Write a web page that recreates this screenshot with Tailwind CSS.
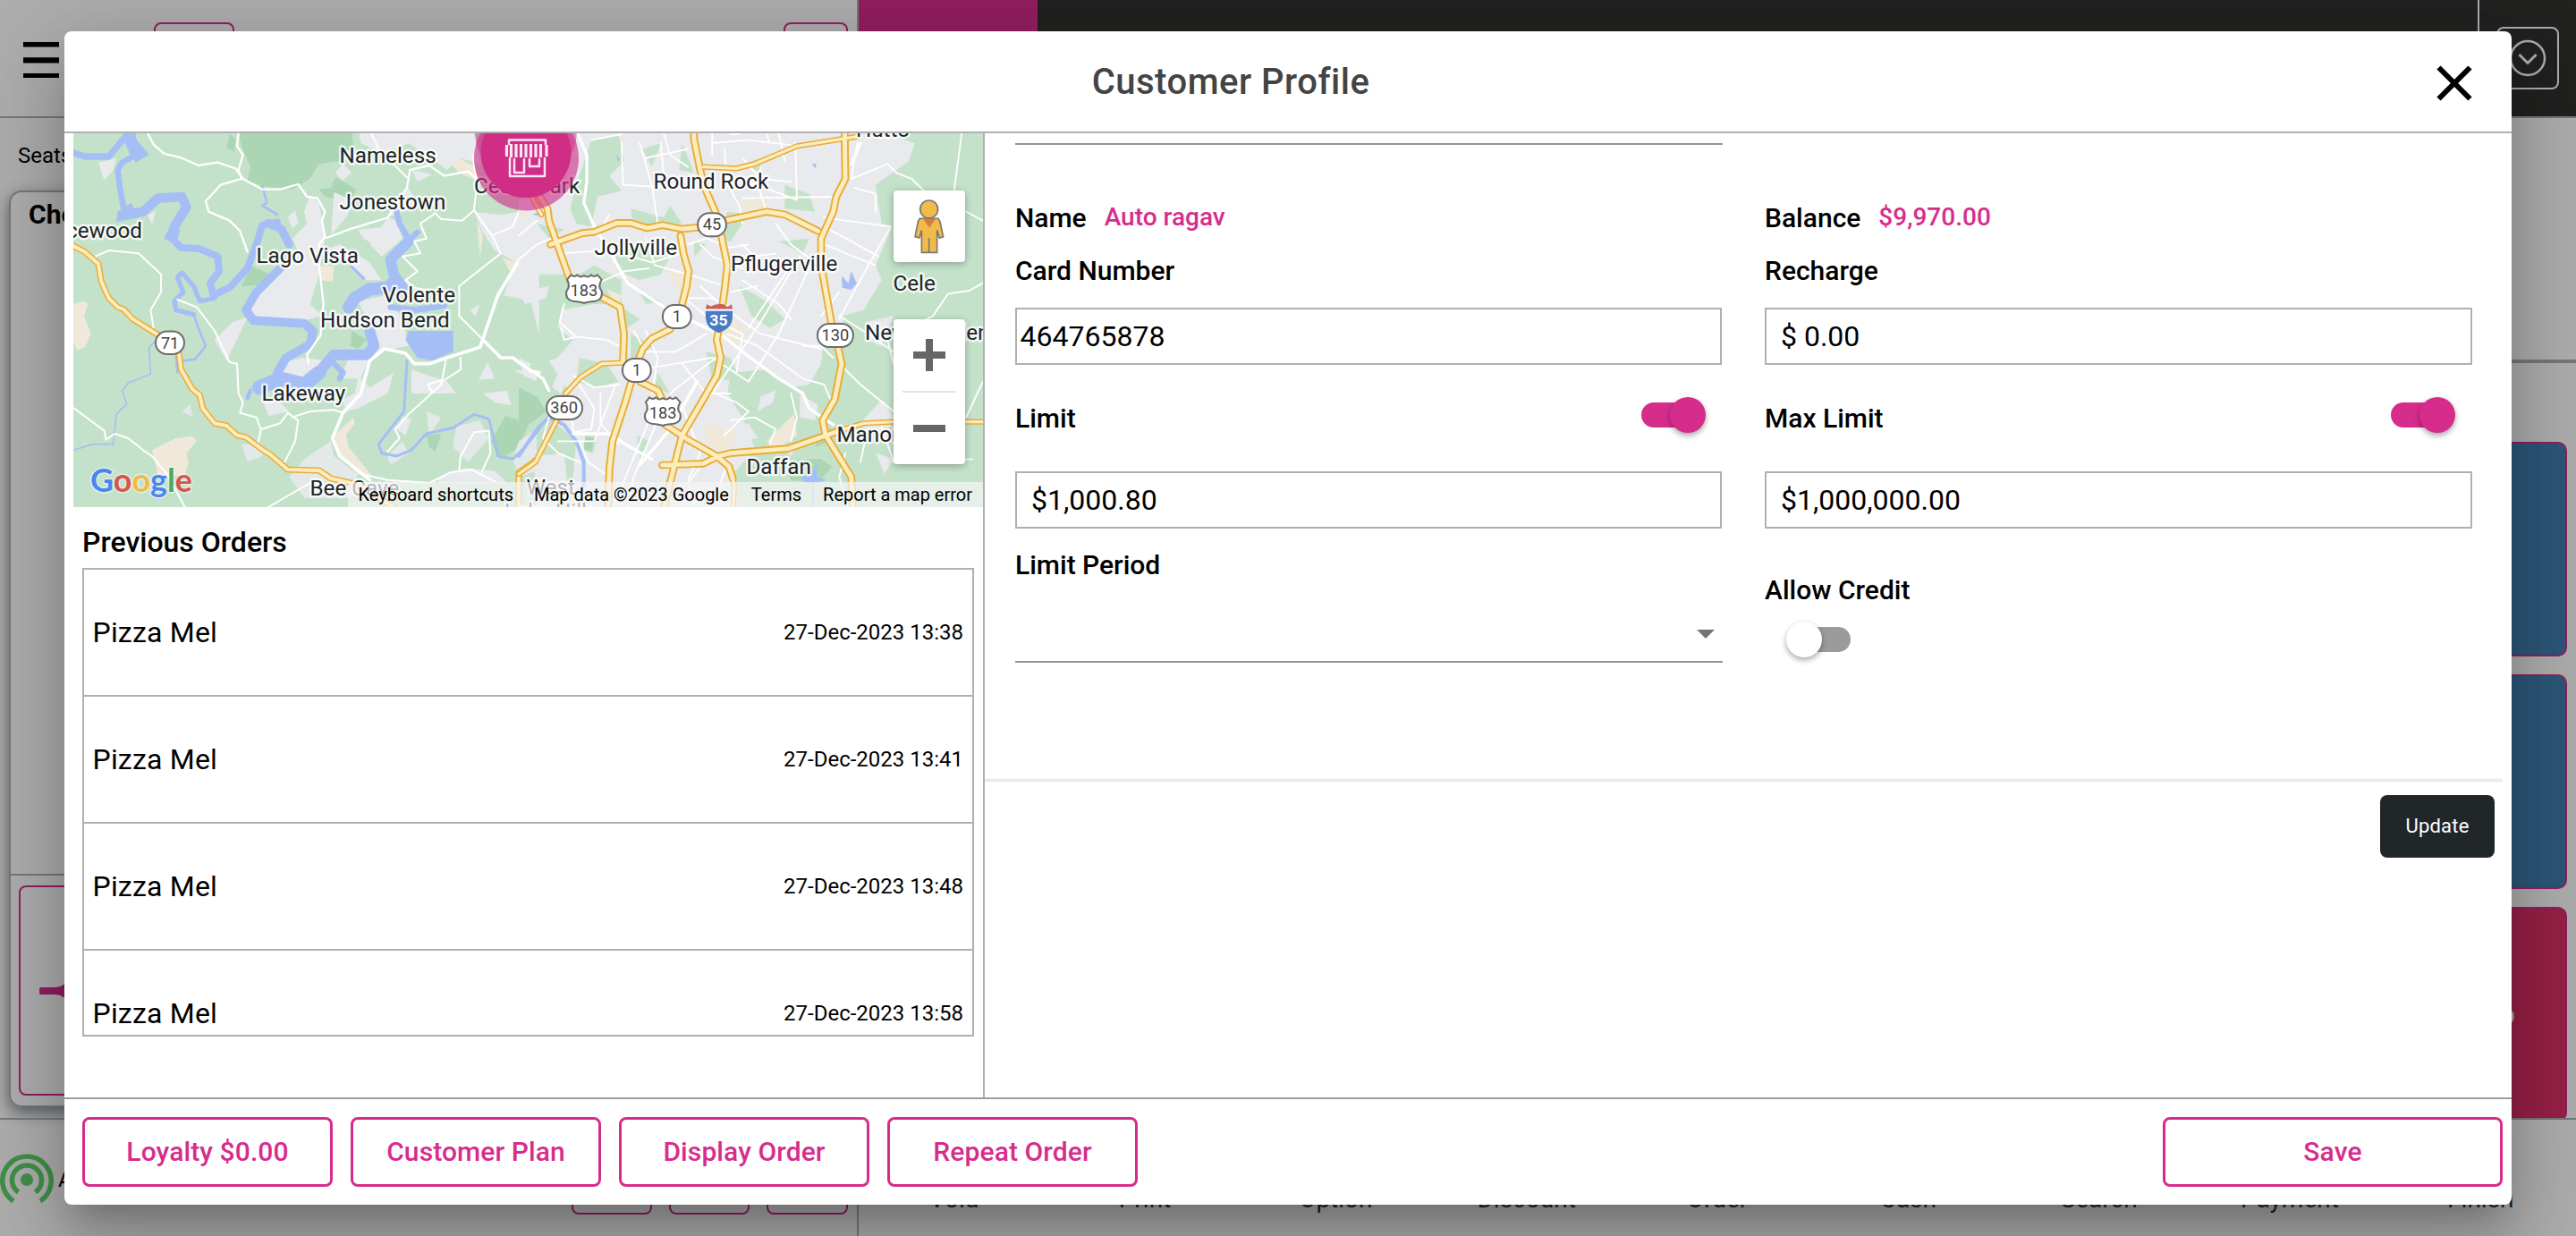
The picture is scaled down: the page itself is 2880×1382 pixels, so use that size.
<!DOCTYPE html>
<html lang="en">
<head>
<meta charset="utf-8">
<title>Customer Profile</title>
<script src="https://cdn.jsdelivr.net/npm/@tailwindcss/browser@4"></script>
</head>
<body class="font-[Roboto,sans-serif] text-black">
<div class="relative flex h-[1382px] w-[2880px] overflow-hidden bg-white">

  <!-- Left order panel -->
  <aside class="flex w-[960px] shrink-0 flex-col border-r-2 border-[#b0b0b0]">
    <header class="flex h-[132px] items-start border-b-2 border-[#b0b0b0] pl-[26px]">
      <svg class="mt-[47px] h-10 w-10" viewBox="0 0 40 40"><path d="M0 0h40v5.6H0zM0 17.2h40v6.4H0zM0 35h40v5.2H0z"/></svg>
      <div class="mt-[25px] ml-[106px] h-[80px] w-[90px] rounded-lg border-2 border-[#d62d8c]"></div>
      <div class="mt-[25px] mr-[10px] ml-auto h-[80px] w-[72px] rounded-lg border-2 border-[#d62d8c]"></div>
    </header>
    <div class="h-[81px] pt-[24px] pl-[20px] text-2xl leading-9">Seats</div>
    <section class="ml-[10px] h-[1025px] w-[938px] rounded-[14px] border-2 border-[#b0b0b0] shadow-[0_6px_18px_#7f8994]">
      <div class="h-[764px] border-b-2 border-[#b0b0b0] pt-[5px] pl-5 text-[30px] leading-10 font-bold">Check</div>
      <div class="mx-[9px] mt-[11px] flex h-[235px] items-center rounded-lg border-2 border-[#d62d8c] pl-[21px]">
        <svg class="h-10 w-20" viewBox="0 0 80 40"><path fill="#d62d8c" d="M1.500 16H18Q23 16 27 13L34 10V30L27 27Q23 24 18 24H1.500Q0 24 0 22V18Q0 16 1.500 16Z"/></svg>
      </div>
    </section>
    <footer class="mt-3 flex h-[132px] border-t-2 border-[#b0b0b0]">
      <svg class="mt-[35px] h-[62px] w-[60px]" viewBox="0 0 60 62" fill="none" stroke="#5fd36b" stroke-width="5.500">
        <path d="M15 56A27.200 27.200 0 1 1 45 56"/><path d="M20.500 46A16.500 16.500 0 1 1 39.500 46"/><circle cx="30" cy="32" r="7" fill="#5fd36b" stroke="none"/>
      </svg>
      <div class="ml-[5px] w-[574px] pt-[49px] text-2xl leading-9">Auto</div>
      <div class="mt-[26px] mr-[19px] h-[80px] w-[90px] rounded-lg border-2 border-[#d62d8c]"></div>
      <div class="mt-[26px] mr-[19px] h-[80px] w-[90px] rounded-lg border-2 border-[#d62d8c]"></div>
      <div class="mt-[26px] h-[80px] w-[91px] rounded-lg border-2 border-[#d62d8c]"></div>
    </footer>
  </aside>

  <!-- Right menu panel -->
  <main class="flex w-[1920px] flex-col">
    <header class="flex h-[132px] border-b-2 border-[#b0b0b0] bg-[#323230]">
      <div class="w-[200px] bg-[#d62d8c]"></div>
      <div class="ml-auto flex w-[110px] items-start border-l-2 border-white pt-[30px] pl-[19px]">
        <div class="flex h-[70px] w-[70px] items-center justify-center rounded-lg border-2 border-white">
          <svg class="h-11 w-11" viewBox="0 0 44 44" fill="none" stroke="#fff" stroke-width="2.500"><circle cx="22" cy="22" r="19"/><path stroke-width="3" d="M12.500 18l9.500 9.500 9.500-9.500"/></svg>
        </div>
      </div>
    </header>
    <div class="h-[274px] border-b-4 border-[#b0b0b0]"></div>
    <div class="flex h-[844px] flex-col items-end gap-5 overflow-hidden pt-[88px] pr-[10px]">
      <div class="h-[240px] w-[200px] shrink-0 rounded-[10px] border-2 border-[#d62d8c] bg-[#4280b2]"></div>
      <div class="h-[240px] w-[200px] shrink-0 rounded-[10px] border-2 border-[#d62d8c] bg-[#4280b2]"></div>
      <div class="flex h-[240px] w-[200px] shrink-0 items-center justify-end rounded-[10px] border-2 border-[#d62d8c] bg-[#dd3068] pr-[56px] text-[32px] text-white">Go</div>
    </div>
    <footer class="grid h-[132px] grid-cols-9 border-t-2 border-[#b0b0b0] pt-[71px] text-center text-[28px] leading-[36px] text-[#323230]">
      <span>Void</span><span>Print</span><span>Option</span><span>Discount</span><span>Order</span><span>Cash</span><span>Search</span><span>Payment</span><span>Finish</span>
    </footer>
  </main>

  <!-- Backdrop and dialog -->
  <div class="absolute inset-0 bg-black/32 pt-[35px] pl-[72px]">
    <div class="flex h-[1312px] w-[2736px] flex-col overflow-hidden rounded-lg bg-white shadow-[0_22px_30px_-14px_rgba(0,0,0,0.2),0_48px_76px_6px_rgba(0,0,0,0.14),0_18px_92px_16px_rgba(0,0,0,0.12)]">

      <header class="flex h-[114px] shrink-0 items-center border-b-2 border-[#b0b0b0] pr-[43px]">
        <h1 class="mt-[2px] w-[2608px] text-center text-[40px] leading-[52px] font-medium tracking-[0.5px] text-[#444]">Customer Profile</h1>
        <svg class="mt-[3px] ml-auto h-[42px] w-[42px]" viewBox="0 0 42 42"><path d="M3.500 3.500l35 35M38.500 3.500l-35 35" stroke="#000" stroke-width="6"/></svg>
      </header>

      <div class="flex h-[1078px] shrink-0">
        <!-- Map and previous orders -->
        <section class="flex w-[1029px] shrink-0 flex-col border-r-2 border-[#b0b0b0] pl-[10px]">
          <div class="relative h-[418px] w-[1017px] overflow-hidden">
            <svg class="block h-[418px] w-[1017px]" viewBox="82 149 1017 418" stroke-linejoin="round" stroke-linecap="round">
              <rect x="82" y="149" width="1017" height="418" fill="#c4e2ca"/>
              <!-- western half -->
              <g transform="translate(80 140) scale(.33333)">
                <g fill="#abd5b3">
                  <path d="M560 27H940L945 70 900 120 830 130 800 180 740 215 640 205 590 185 600 140 570 70Z"/>
                  <path d="M885 175L955 215 935 255 850 240 830 215 870 210ZM530 30L550 45 545 90 520 75Z"/>
                  <path d="M600 470L670 500 660 535 570 540ZM1455 975L1535 1000 1500 1080 1440 1120 1405 1060 1430 1020ZM940 690L990 720 960 750 935 740ZM1190 1040L1240 1035 1220 1095 1200 1080Z"/>
                </g>
                <g fill="#e8eaed">
                  <path d="M965 27H1350L1370 130 1300 110 1260 150 1190 100 1130 60 1050 100 970 60Z"/>
                  <path d="M800 235L830 260 850 380 830 500 800 600 840 640 780 655 640 650 590 640 600 590 680 510 700 480 760 420 740 380 790 330 780 290Z"/>
                  <path d="M520 790L480 720 540 660 590 645ZM880 225L950 255 920 310 870 370ZM960 350L1060 340 1010 400 980 380ZM1140 150L1210 165 1160 190ZM910 130L940 160 910 185 885 160Z"/>
                  <path d="M1060 310L1090 320 1110 380 1040 440 1000 400ZM90 125L150 110 140 150 110 185ZM725 310L750 285 760 330 740 345ZM255 300L282 290 270 335ZM840 420L900 400 1000 460 1040 520 980 520 930 460 870 440Z"/>
                  <path d="M960 590L1060 570 1110 650 1130 740 1050 755 990 800 970 850 1000 880 1080 830 1060 900 960 950 920 960 910 920 950 900 960 850 900 850 930 780 1030 740 1000 670ZM690 800L780 780 850 790 820 840 720 850Z"/>
                  <path d="M1350 290L1440 300 1568 280V700L1540 590 1450 570 1490 460 1420 420 1380 360ZM1130 210L1160 260 1110 290 1060 310ZM1140 820L1200 840 1260 860 1290 900 1140 900ZM1395 795L1420 850 1365 855ZM1380 900L1460 890 1475 940 1420 930ZM1480 820L1560 830V860Z"/>
                  <path d="M1190 960L1240 980 1200 1040ZM1290 1010L1370 990 1400 1050 1330 1130 1280 1080ZM1500 1060L1560 1020V1160L1500 1180 1480 1120ZM780 1120L870 1060 880 1110 960 1170 940 1250 780 1250 730 1180ZM1060 1110L1110 1060 1130 1100 1070 1140ZM570 1070L640 1070 640 1110 590 1130ZM370 960L400 935 405 978Z" opacity=".85"/>
                  <path d="M1335 620L1370 600 1355 640ZM640 920L700 930 730 960 660 975ZM1110 980L1140 985 1120 1040 1090 1020ZM1230 1180L1320 1150 1420 1160 1460 1200H1230Z"/>
                </g>
                <g fill="#f0e9da">
                  <path d="M6 600L40 590 55 600 42 640 65 700 45 745 20 755 6 730ZM270 1090L350 1050 405 1043 420 1060 385 1100 392 1130 380 1175 290 1175Z"/>
                  <path d="M1270 125L1300 112 1355 140 1370 190 1300 160ZM835 470L880 475 875 525 835 520ZM880 1040L945 980 950 1000 920 1040 930 1080 1010 1180 960 1170 900 1110ZM1360 320L1380 370 1370 440ZM1445 445L1490 460 1475 500Z"/>
                </g>
                <g fill="none" stroke="#a5bff6">
                  <path stroke-width="22" d="M6 92L45 105H125L175 45 190 27"/>
                  <path stroke-width="20" d="M205 27L215 100 170 125 155 150 162 210 175 280 180 300"/>
                  <path stroke-width="32" d="M170 300L240 290 290 245 370 240 385 275 345 340 335 370"/>
                  <path stroke-width="24" d="M330 370L365 410 430 415 490 440 495 490 465 530 475 570 530 545 590 480 620 400 640 335 690 325"/>
                  <path stroke-width="28" d="M660 328L705 350 730 400M700 480L620 560 585 620"/>
                  <path stroke-width="16" d="M480 580L430 590 410 540 370 495 355 510 375 560 345 590 350 620 410 635"/>
                  <path stroke-width="8" d="M410 635L425 680 450 740 415 785 375 790M640 205L655 260 640 270 690 300M355 830L350 760"/>
                  <path stroke-width="30" d="M585 620L610 655 780 665 810 690 800 735 720 780 690 830"/>
                  <path stroke-width="48" d="M630 880L700 850 780 870 830 830"/>
                  <path stroke-width="14" d="M600 890L590 915"/>
                  <path stroke-width="36" d="M820 840L880 770 990 770 1015 740 1000 690"/>
                  <path stroke-width="42" d="M930 610L950 580 1000 550 1060 545 1090 520"/>
                  <path stroke-width="36" d="M1110 545L1080 500 1070 450 1130 390"/>
                  <path stroke-width="20" d="M1135 390L1100 330 1090 290M1130 385L1160 360M1070 610L1150 620 1250 605M870 790L910 830 900 850"/>
                  <path stroke-width="10" d="M980 515L940 475"/>
                  <path stroke-width="9" d="M1125 790L1115 960 1030 1070 1040 1100 1090 1110 1140 1090 1190 1035 1280 1015 1350 970 1400 985 1430 1110 1480 1120 1520 1080 1568 1020"/>
                  <path stroke-width="5" d="M280 725L260 745 265 835 190 865 170 890 185 935 150 970 140 1070 70 1070 6 1090"/>
                </g>
                <path fill="#a5bff6" d="M1130 690H1280V760L1210 790 1160 780 1120 720ZM155 290L200 260 225 310 150 325ZM310 380L330 340 365 350 350 400ZM170 40H210L260 98 215 125 195 95Z"/>
                <g fill="none" stroke="#fff">
                  <path stroke-width="7" d="M255 27L275 65 310 95 370 110 425 135 490 125 550 145 575 180 640 215 700 215 760 198 790 240 825 245 850 290 840 320 850 375 830 400 830 470 845 600 835 705 790 770 795 800"/>
                  <path stroke-width="7" d="M560 27L555 70 575 100 560 150 570 180M570 180L500 200 450 255 460 290 530 320 565 355 590 425M855 378L930 350 1060 310 1125 210 1135 150 1200 135 1250 170 1330 155 1360 180"/>
                  <path stroke-width="6" d="M80 440L125 420 225 430 300 500 300 560 265 620 275 680M355 585L420 610 480 690 530 795 555 800 560 900 575 930 565 965 620 980 635 1020 625 1070"/>
                  <path stroke-width="6" d="M6 948L110 1025 115 1055 145 1035 190 1050 240 1090 270 1110 320 1170 380 1281M635 1020L700 1000 725 965 760 990 750 1060 715 1130M740 980L800 960 880 955 910 965M1005 27L1030 80 1125 175"/>
                  <path stroke-width="6" d="M1350 285L1310 320 1240 315 1220 295 1170 330 1190 380 1150 390 1170 430 1110 440 1160 490 1120 520 1150 545 1200 555M1350 285L1410 370 1440 430 1350 500 1300 540 1300 640 1380 720M1060 1095L1100 1050 1085 1020 1130 970 1240 870 1255 790M1240 855L1195 870 1210 895M1305 780V820L1250 855M1300 1160L1305 1110 1350 1030 1400 1025 1405 1100 1375 1165M660 1281L800 1200M970 1170L1060 1190 1200 1200 1270 1165 1340 1155 1420 1195M1350 280L1360 200 1345 100M1410 370L1480 340 1500 290 1560 330"/>
                  <path stroke-width="11" d="M1568 415L1500 455 1430 570 1370 745 1260 780 1200 800 1150 800 1120 765 1050 750 1000 790 970 900 910 965 875 1050 900 1110 1000 1190M1380 720L1440 780 1480 780 1540 825 1568 830"/>
                </g>
                <g fill="none">
                  <path stroke="#e9ad37" stroke-width="21" d="M0 402L45 425 90 465 100 525 125 580 155 610 175 618 205 650 290 703 M360 765L367 818 405 885 430 905 440 950 480 1000 520 1008 555 1040 585 1047 640 1088 665 1103 725 1155 830 1158 870 1185 960 1205 1080 1281M1568 1110L1550 1130 1500 1165 1500 1281"/>
                  <path stroke="#fdecbc" stroke-width="12" d="M0 402L45 425 90 465 100 525 125 580 155 610 175 618 205 650 290 703 M360 765L367 818 405 885 430 905 440 950 480 1000 520 1008 555 1040 585 1047 640 1088 665 1103 725 1155 830 1158 870 1185 960 1205 1080 1281M1568 1110L1550 1130 1500 1165 1500 1281"/>
                </g>
              </g>
              <!-- eastern half -->
              <g transform="translate(580 140) scale(.33802 .33333)">
                <path fill="#e8eaed" d="M60 27H1200L1310 60 1290 120 1180 200 1200 330 1235 340 1180 470 1200 520 1140 620 1070 640 1080 680 1010 690 1000 800 960 870 900 880 820 820 700 830 690 900 740 980 780 1080 760 1110 700 1180 730 1285H170L190 1060 100 980 170 900 110 800 180 720 130 680 140 620 250 600 340 600 340 520 250 470 200 500 60 500 0 480V250L80 240Z"/>
                <g fill="#c4e2ca">
                  <path d="M240 50L330 30 350 120 300 170 340 220 260 240 240 340 190 330 170 280 190 200ZM370 280L480 310 500 270 540 330 380 340ZM320 440L410 400 500 440 470 500 400 520 330 490ZM690 290L760 300 700 390 660 380Z"/>
                  <path d="M410 80L470 60 440 140ZM740 130L800 110 800 160ZM880 200L960 230 980 290 880 280ZM580 390L620 400 580 440ZM730 540L820 590 880 650 830 680 770 640ZM400 560L470 590 420 600ZM340 610L400 650 360 680ZM200 780L290 800 330 860 260 880 190 860ZM860 390L960 380 940 430ZM620 760L700 780 730 850 640 860ZM370 700L450 740 370 790ZM220 1040L260 1045 245 1100 215 1090ZM60 330L150 350 100 380ZM540 60L580 160 530 150ZM390 1040L430 1060 400 1120ZM460 830L500 900 450 880Z"/>
                </g>
                <g fill="#abd5b3"><path d="M880 1130L960 1120 1000 1120 1035 1145 990 1200 900 1190ZM0 880L60 910 90 960 40 1000 0 1000ZM990 1040L1030 1060 980 1080ZM220 1045L250 1050 240 1095 215 1085Z"/></g>
                <g fill="#e8eaed">
                  <path d="M1130 1000L1200 920 1240 980 1220 1040 1150 1030ZM800 910L850 890 840 930 790 960ZM930 900L990 940 980 990 930 980ZM100 790L160 770 130 840ZM1150 660L1240 640 1200 740 1150 720ZM130 830L160 850 140 900 110 880ZM1180 1100L1240 1120 1210 1170ZM860 1080L920 1080 900 1110ZM700 1010L760 1000 790 1050 700 1060Z"/>
                  <path d="M0 560L100 540 90 580 20 600ZM0 780L40 800 20 850ZM50 1110L150 1100 170 1285H60Z"/>
                </g>
                <g fill="#f0e9da">
                  <path d="M500 490L580 480 570 570 530 560ZM730 260L830 240 820 290 760 310ZM820 1060L910 970 920 1040 850 1090ZM610 1000L720 1020 700 1100 620 1070ZM700 640L760 690 710 740 670 700ZM0 290L40 300 0 320ZM280 380L340 390 290 430ZM290 550L340 570 330 620Z"/>
                </g>
                <g fill="#a5bff6"><path d="M1068 505L1090 530 1100 490 1118 530 1100 552 1070 545ZM930 1180L965 1175 985 1135 985 1180 1020 1190 980 1200H950ZM320 95L335 115 330 122ZM970 130L985 130 980 145ZM45 300L80 285 70 305Z"/>
                  <path fill="none" stroke="#a5bff6" stroke-width="12" d="M0 1110L60 1020 100 980 150 1005 190 1060 215 1130 215 1210"/>
                  <path fill="none" stroke="#a5bff6" stroke-width="6" d="M973 1190V1285"/></g>
                <g fill="none" stroke="#fff" stroke-width="5.500">
                  <path d="M340 60L345 200 500 210M400 60L440 200 460 330M240 50L340 30M420 110L560 80M640 100V27M680 80L690 200 730 270 740 330M800 140L790 200 820 290M915 60L920 250M740 245L1040 240M640 60L760 50 930 70M690 170L840 220 920 250M860 27L880 120"/>
                  <path d="M130 430L300 420 440 460 540 430M240 540L350 490 430 480M420 380L450 470 560 500 680 540M600 400L640 440 740 480M600 540L690 620 800 700 1000 750M740 520L860 600 900 650M960 480L860 700 760 860M930 440L800 660 640 900M900 470L760 680M740 400L780 440 850 430M850 330L900 400 980 460M700 560L790 540M560 400L620 380 700 410 760 400"/>
                  <path d="M1010 340L1190 440M1010 400L1180 470M1230 340L1010 310M1230 340L1140 500 1060 650M1120 60L1100 180 1220 130 1250 160 1300 180 1340 220 1480 290 1535 320M1465 27L1440 220M1110 210L1180 230 1180 290M1535 530L1490 555 1420 565 1370 640 1290 680M1060 640L1140 690 1240 760M1060 800L1130 870 1240 960M1220 720L1240 800M1535 860L1480 980M1080 1100L1060 1180 1090 1285M1150 1040L1130 1130M1200 1010L1240 1130 1500 1120"/>
                  <path d="M150 600L135 660 190 710 290 720 330 740M140 680L150 720 190 710M180 840L250 880 330 870M200 870L250 950 240 1020 180 1030 175 980M320 870L250 1060 130 1060M380 690L420 760 520 760 620 700M400 820L520 800 640 780 760 860M460 920L370 1140 310 1285M500 900L600 820 680 760M480 940L380 1180 360 1285M270 900L270 1000 330 1070M540 940L600 1100 560 1190M650 900L720 930 760 960 680 1040M540 800L620 900 700 900M420 690L460 780 440 900M700 990L780 980 850 1020 830 1070M620 1120L560 1200 580 1285M680 1160L640 1285M200 1060L230 1130 300 1180M560 590L620 640 740 700 720 830M690 700L790 740 940 850 1010 870 1040 940"/>
                  <path d="M560 580L640 580 700 610M740 110L800 180 900 190M300 300L260 370 220 360M0 450L60 400 130 370M0 370L60 320M940 740L1000 740 1040 780M900 900L920 980 900 1060M1000 640L1060 560M100 980L80 1050 130 1100 200 1130M820 27L830 60M480 27L500 100 560 140M470 60L480 180"/>
                </g>
                <g fill="none" stroke="#fff" stroke-width="10">
                  <path d="M195 27L225 100 225 190 215 260 250 340 310 440 360 530 480 610 680 710 740 760 860 850 940 900 960 950 1040 1005M0 795L80 850 100 890M1130 60L1100 130M700 27L730 27M590 860L500 1020 400 1140M180 1035L300 1035 360 1075 440 1120"/>
                </g>
                <g fill="none" stroke="#e9ad37" stroke-width="26">
                  <path d="M578 0L580 50 600 150 615 210 650 290 670 370 690 470 680 560 660 690 655 720 668 780 655 840 610 920 540 1040 515 1140 480 1285M70 240L95 280 100 320 145 450 170 520M265 572L335 610 348 700 345 790 M105 400L210 362 250 358 325 328 370 328 425 345 475 335 540 348 600 342 690 318 820 290 880 300 990 355M535 370L545 430 562 490 555 540 540 600M500 685L440 715 410 750 395 790M375 850L355 920 310 1060 300 1150 295 1285M400 860L460 890 475 920M485 1005L560 1055 655 1110 695 1145 708 1185M1078 27L1080 180 1050 240 1040 290 1000 380 1000 470 1035 670M1055 740L1068 800 1045 920 1005 990 1015 1040 1100 1180 1105 1285M475 1140L610 1135 660 1110 700 1100 890 1085 1060 1025"/>
                  <path stroke-width="19" d="M610 140L720 145 780 130 920 70 1120 38M1060 1025L1140 1000 1240 995H1540M345 797L275 800 205 845 155 900M125 990L55 1130 0 1170M703 1180L712 1200 710 1285M42 240L75 300"/>
                </g>
                <g fill="none" stroke="#fdecbc" stroke-width="14.500">
                  <path d="M578 0L580 50 600 150 615 210 650 290 670 370 690 470 680 560 660 690 655 720 668 780 655 840 610 920 540 1040 515 1140 480 1285M70 240L95 280 100 320 145 450 170 520M265 572L335 610 348 700 345 790 M105 400L210 362 250 358 325 328 370 328 425 345 475 335 540 348 600 342 690 318 820 290 880 300 990 355M535 370L545 430 562 490 555 540 540 600M500 685L440 715 410 750 395 790M375 850L355 920 310 1060 300 1150 295 1285M400 860L460 890 475 920M485 1005L560 1055 655 1110 695 1145 708 1185M1078 27L1080 180 1050 240 1040 290 1000 380 1000 470 1035 670M1055 740L1068 800 1045 920 1005 990 1015 1040 1100 1180 1105 1285M475 1140L610 1135 660 1110 700 1100 890 1085 1060 1025"/>
                  <path stroke-width="10" d="M610 140L720 145 780 130 920 70 1120 38M1060 1025L1140 1000 1240 995H1540M345 797L275 800 205 845 155 900M125 990L55 1130 0 1170M703 1180L712 1200 710 1285M42 240L75 300"/>
                </g>
                <!-- route shields -->
                <g fill="#fff" stroke="#6d6d6d" stroke-width="6">
                  <rect x="592" y="295" width="94" height="78" rx="38"/>
                  <rect x="476" y="603" width="94" height="78" rx="38"/>
                  <rect x="343" y="783" width="94" height="78" rx="38"/>
                  <rect x="988" y="666" width="118" height="78" rx="38"/>
                  <rect x="92" y="909" width="118" height="78" rx="38"/>
                  <path id="us" d="M172 502L160 518Q172 540 158 556Q152 585 180 590Q205 592 216 597Q227 592 252 590Q280 585 274 556Q260 540 274 518L260 502Q248 512 240 502Q228 514 216 504Q204 514 194 502Q184 512 172 502Z"/>
                  <use href="#us" x="260" y="411"/>
                </g>
                <path fill="#4a7ac6" d="M618 620H707Q709 655 700 670 690 686 662 697 634 686 625 670 616 655 618 620Z"/>
                <path fill="#c9605c" d="M622 600Q634 610 640 606T662 600T684 606T704 600L707 617H618Z"/>
                <path stroke="#fff" stroke-width="6" stroke-linecap="butt" d="M618 620H708"/>
                <g fill="#444" font-family="Roboto" font-size="54" text-anchor="middle">
                  <text x="639" y="352">45</text><text x="523" y="660">1</text><text x="390" y="840">1</text><text x="1047" y="724">130</text><text x="150" y="967">360</text><text x="216" y="572">183</text><text x="477" y="983">183</text>
                  <text x="661" y="672" fill="#fff" font-weight="700" font-size="52">35</text>
                </g>
              </g>
              <rect x="174" y="370.500" width="32" height="25.500" rx="12.750" fill="#fff" stroke="#6d6d6d" stroke-width="2"/>
              <text x="190" y="389.500" fill="#444" font-family="Roboto" font-size="18" text-anchor="middle">71</text>
              <!-- place names -->
              <g font-family="Roboto" font-size="24.200" fill="#222428" stroke="#fff" stroke-opacity=".75" stroke-width="5" paint-order="stroke">
                <text x="379.500" y="181.500">Nameless</text><text x="379.500" y="233.500">Jonestown</text><text x="159" y="266" text-anchor="end">Spicewood</text>
                <text x="286.500" y="293.500">Lago Vista</text><text x="427.500" y="337.500">Volente</text><text x="358" y="365.500">Hudson Bend</text><text x="292.500" y="448">Lakeway</text><text x="346.500" y="553.500">Bee Cave</text>
                <text x="530" y="216">Cedar Park</text><text x="730.500" y="211">Round Rock</text><text x="957" y="152.500">Hutto</text><text x="664.500" y="284.500">Jollyville</text><text x="817" y="302.500">Pflugerville</text>
                <text x="998.500" y="324.500">Cele</text><text x="967" y="380">New Sweden</text><text x="935.500" y="494">Manor</text><text x="834.500" y="529.500">Daffan</text><text x="588.500" y="553">West</text><text x="564" y="580">Lake Hills</text>
              </g>
              <text x="101" y="550" font-family="Lato" font-size="37" font-weight="700" textLength="114" lengthAdjust="spacingAndGlyphs" stroke="#fff" stroke-opacity=".5" stroke-width="3" paint-order="stroke"><tspan fill="#4a86f0">G</tspan><tspan fill="#d9544b">o</tspan><tspan fill="#f0bb45">o</tspan><tspan fill="#4a86f0">g</tspan><tspan fill="#54a65a">l</tspan><tspan fill="#d9544b">e</tspan></text>
              <!-- store marker -->
              <circle cx="588.500" cy="177" r="58.500" fill="#d02d87" opacity=".62"/>
              <circle cx="588" cy="146" r="57" fill="#d02d87" opacity=".5"/>
              <circle cx="588" cy="170.500" r="50.500" fill="#d02d87"/>
              <g fill="none" stroke="#fbe6f2" stroke-width="2.500">
                <path d="M569 161V156.500H610V161M570 177V197H609V177M575 178V193H586V178M592 178V186H603V178"/>
                <path stroke-width="3.200" stroke-linecap="butt" d="M566.500 162V175M571.500 161V176M577 161V176M582.500 161V176M588 161V176M593.500 161V176M599 161V176M604.500 161V176M611 162V175"/>
              </g>
            </svg>
            <!-- map controls -->
            <div class="absolute top-[64px] left-[917px] flex h-20 w-20 items-center justify-center rounded bg-white shadow-[0_2px_8px_rgba(0,0,0,0.3)]">
              <svg class="h-[61px] w-9" viewBox="1304 248 104 184"><path fill="#f2bb49" stroke="#777" stroke-width="5" d="M1324 312H1386L1392 322 1403 374 1390 378 1382 352V427H1330V352L1322 378 1308 374 1318 322Z"/><path stroke="#777" stroke-width="5" d="M1355 378V427"/><path fill="#d4803c" d="M1334 313H1378L1356 344Z"/><circle cx="1355" cy="281" r="30" fill="#f2bb49" stroke="#777" stroke-width="5"/></svg>
            </div>
            <div class="absolute top-[208px] left-[917px] flex h-[162px] w-20 flex-col items-center rounded bg-white shadow-[0_2px_8px_rgba(0,0,0,0.3)]">
              <svg class="h-[162px] w-[60px]" viewBox="0 0 60 162"><path fill="#666" d="M26 22h8v14h14v8H34v14h-8V44H12v-8h14zM12 118h36v8H12z"/><path fill="#e4e4e4" d="M0 80h60v2H0z"/></svg>
            </div>
            <div class="absolute right-0 bottom-0 flex h-7 bg-[#f5f5f5]/70 text-xl leading-[29px] whitespace-nowrap">
              <span class="pr-[10px] pl-3">Keyboard shortcuts</span><span class="px-[13px]">Map data ©2023 Google</span><span class="px-3">Terms</span><span class="px-3">Report a map error</span>
            </div>
          </div>

          <h2 class="mt-[17px] ml-[10px] h-[51px] text-[32px] leading-[44px] font-medium">Previous Orders</h2>
          <div class="ml-[10px] h-[524px] w-[997px] overflow-hidden border-2 border-[#b0b0b0]">
            <div class="flex h-[142px] items-center justify-between border-b-2 border-[#b0b0b0] pr-[10px] pl-[9.5px]"><span class="text-[32px] tracking-[0.2px]">Pizza Mel</span><span class="text-2xl">27-Dec-2023 13:38</span></div>
            <div class="flex h-[142px] items-center justify-between border-b-2 border-[#b0b0b0] pr-[10px] pl-[9.5px]"><span class="text-[32px] tracking-[0.2px]">Pizza Mel</span><span class="text-2xl">27-Dec-2023 13:41</span></div>
            <div class="flex h-[142px] items-center justify-between border-b-2 border-[#b0b0b0] pr-[10px] pl-[9.5px]"><span class="text-[32px] tracking-[0.2px]">Pizza Mel</span><span class="text-2xl">27-Dec-2023 13:48</span></div>
            <div class="flex h-[142px] items-center justify-between border-b-2 border-[#b0b0b0] pr-[10px] pl-[9.5px]"><span class="text-[32px] tracking-[0.2px]">Pizza Mel</span><span class="text-2xl">27-Dec-2023 13:58</span></div>
          </div>
        </section>

        <!-- House account form -->
        <section class="w-[1707px]">
          <div class="flex h-[721px] gap-[47px] pl-[34px]">
            <div class="flex w-[791px] flex-col pt-[11px]">
              <div class="h-[2px] bg-[#949494]"></div>
              <div class="mt-[62px] flex h-10 gap-[20px]"><span class="text-[30px] leading-10 font-medium">Name</span><span class="text-[28px] leading-[37px] font-medium text-[#d62d8c]">Auto ragav</span></div>
              <div class="mt-[19px] text-[30px] leading-10 font-medium">Card Number</div>
              <div class="mt-[21px] h-16 w-[790px] border-2 border-[#b0b0b0] pl-[3.5px] text-[32px] leading-[60px]">464765878</div>
              <div class="mt-10 flex h-10 items-center justify-between pr-[14px]"><span class="text-[30px] leading-10 font-medium">Limit</span>
                <span class="mr-[9px] mb-2 flex h-7 w-[68px] items-center rounded-[14px] bg-[#d62d8c] pl-[32px]"><span class="h-10 w-10 shrink-0 rounded-full bg-[#d62d8c] shadow-[0_3px_6px_rgba(0,0,0,0.35)]"></span></span></div>
              <div class="mt-[39px] h-16 w-[790px] border-2 border-[#b0b0b0] pl-[16px] text-[32px] leading-[60px]">$1,000.80</div>
              <div class="mt-[21px] mb-px text-[30px] leading-10 font-medium">Limit Period</div>
              <div class="flex h-[88px] items-end justify-end border-b-2 border-[#949494] pr-[9px] pb-[25px]"><svg class="h-[10px] w-5" viewBox="0 0 20 10"><path fill="#757575" d="M0 0h20L10 10z"/></svg></div>
            </div>
            <div class="flex w-[791px] flex-col pt-[13px]">
              <div class="mt-[62px] flex h-10 gap-[20px]"><span class="text-[30px] leading-10 font-medium">Balance</span><span class="text-[28px] leading-[37px] font-medium text-[#d62d8c]">$9,970.00</span></div>
              <div class="mt-[19px] text-[30px] leading-10 font-medium">Recharge</div>
              <div class="mt-[21px] h-16 w-[791px] border-2 border-[#b0b0b0] pl-[16px] text-[32px] leading-[60px]">$ 0.00</div>
              <div class="mt-10 flex h-10 items-center justify-between pr-[14px]"><span class="text-[30px] leading-10 font-medium">Max Limit</span>
                <span class="mr-[9px] mb-2 flex h-7 w-[68px] items-center rounded-[14px] bg-[#d62d8c] pl-[32px]"><span class="h-10 w-10 shrink-0 rounded-full bg-[#d62d8c] shadow-[0_3px_6px_rgba(0,0,0,0.35)]"></span></span></div>
              <div class="mt-[39px] h-16 w-[791px] border-2 border-[#b0b0b0] pl-[16px] text-[32px] leading-[60px]">$1,000,000.00</div>
              <div class="mt-[49px] text-[30px] leading-10 font-medium">Allow Credit</div>
              <div class="mt-[21px] ml-[29px] flex h-7 w-[67px] items-center rounded-[14px] bg-[#9b9b9b]"><span class="-ml-[5px] h-10 w-10 shrink-0 rounded-full bg-white shadow-[0_3px_6px_rgba(0,0,0,0.35)]"></span></div>
            </div>
          </div>
          <div class="h-1 w-[1697px] bg-linear-to-b from-[#f6f6f6] to-[#e2e2e2]"></div>
          <div class="mt-[15px] mr-[19px] ml-auto flex h-[70px] w-32 items-center justify-center rounded-lg bg-[#212629] pb-[2px] text-[22px] tracking-[0.2px] text-white">Update</div>
        </section>
      </div>

      <footer class="flex h-[120px] items-start gap-5 border-t-2 border-[#9e9e9e] px-5 pt-5 pr-[10px] text-[30px] font-medium tracking-[0.1px] text-[#d62d8c]">
        <div class="flex h-[78px] w-[280px] items-center justify-center rounded-lg border-3 border-[#d62d8c] pb-px">Loyalty $0.00</div>
        <div class="flex h-[78px] w-[280px] items-center justify-center rounded-lg border-3 border-[#d62d8c] pb-px">Customer Plan</div>
        <div class="flex h-[78px] w-[280px] items-center justify-center rounded-lg border-3 border-[#d62d8c] pb-px">Display Order</div>
        <div class="flex h-[78px] w-[280px] items-center justify-center rounded-lg border-3 border-[#d62d8c] pb-px">Repeat Order</div>
        <div class="ml-auto flex h-[78px] w-[380px] items-center justify-center rounded-lg border-3 border-[#d62d8c] pb-px">Save</div>
      </footer>
    </div>
  </div>
</div>
</body>
</html>
